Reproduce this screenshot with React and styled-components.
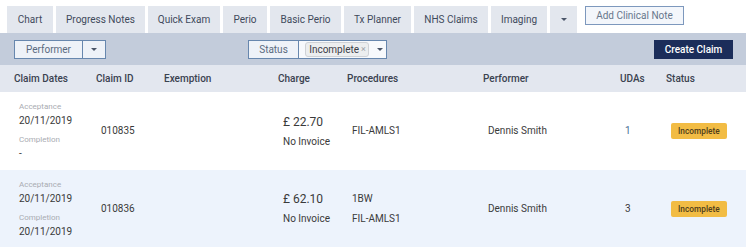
import React from "react";
import styled, { createGlobalStyle } from "styled-components";

const GlobalStyle = createGlobalStyle`
  body {
    margin: 0;
    background: #ffffff;
    font-family: Roboto, "Liberation Sans", sans-serif;
    color: #333;
  }
`;

const Page = styled.div`
  width: 746px;
  height: 247px;
  overflow: hidden;
`;

const TabBar = styled.div`
  display: flex;
  align-items: flex-start;
  height: 33px;
  padding: 6px 0 0 7px;
  box-sizing: border-box;
`;

const Tab = styled.div`
  display: flex;
  align-items: center;
  justify-content: center;
  height: 27px;
  width: ${(p) => p.$w}px;
  flex-shrink: 0;
  margin-right: 3px;
  background: #e3e7ee;
  color: #3f4a5c;
  font-size: 10px;
  white-space: nowrap;
`;

const Caret = styled.span`
  display: inline-block;
  width: 0;
  height: 0;
  border-left: ${(p) => p.$size || 3}px solid transparent;
  border-right: ${(p) => p.$size || 3}px solid transparent;
  border-top: ${(p) => p.$size || 3}px solid ${(p) => p.$color || "#4a5568"};
`;

const NoteButton = styled.div`
  display: flex;
  align-items: center;
  justify-content: center;
  margin-left: 5px;
  width: 99px;
  height: 19px;
  box-sizing: border-box;
  border: 1px solid #7d98bd;
  background: #f3f6fb;
  color: #68768c;
  font-size: 10px;
`;

const Toolbar = styled.div`
  display: flex;
  align-items: center;
  height: 32px;
  padding: 0 13px 0 14px;
  background: #c3ccdb;
`;

const SplitButton = styled.div`
  display: flex;
  height: 19px;
  box-sizing: border-box;
  border: 1px solid #6787ae;
  background: #eef2f8;
  margin-left: ${(p) => p.$offset || 0}px;
`;

const SplitPart = styled.div`
  display: flex;
  align-items: center;
  justify-content: center;
  width: ${(p) => p.$w}px;
  color: #5a6a80;
  font-size: 10px;
  background: ${(p) => p.$bg || "transparent"};
  & + & {
    border-left: 1px solid #6787ae;
  }
`;

const Chip = styled.span`
  display: inline-flex;
  align-items: center;
  height: 13px;
  padding: 0 2px 0 3px;
  margin: 0 8px 0 3px;
  border: 1px solid #cfd2d6;
  border-radius: 3px;
  background: #eceeef;
  color: #3b4048;
  font-size: 10px;
  gap: 2px;
`;

const ChipX = styled.span`
  color: #a0a4aa;
  font-size: 9px;
`;

const PrimaryButton = styled.div`
  display: flex;
  align-items: center;
  justify-content: center;
  margin-left: auto;
  width: 79px;
  height: 19px;
  background: #1b2d5a;
  color: #fff;
  font-size: 10px;
  font-weight: 500;
`;

const Grid = styled.div`
  display: grid;
  grid-template-columns: 82px 68px 114px 69px 136px 137px 46px 1fr;
  align-items: center;
  padding-left: 10px;
  background: ${(p) => p.$bg};
  height: ${(p) => p.$h}px;
`;

const HeadCell = styled.div`
  padding-left: 4px;
  font-size: 10px;
  font-weight: 500;
  color: #3a4250;
`;

const Cell = styled.div`
  padding-left: 9px;
  font-size: 10px;
  line-height: 12px;
  color: ${(p) => p.$color || "#3a3a3a"};
  display: flex;
  flex-direction: column;
  gap: ${(p) => p.$gap || 0}px;
`;

const DateLabel = styled.div`
  font-size: 8px;
  line-height: 10px;
  color: #a9acb2;
  margin-top: ${(p) => (p.$second ? 8 : 0)}px;
  margin-bottom: 3px;
`;

const Amount = styled.div`
  font-size: 12px;
  line-height: 14px;
`;

const Badge = styled.span`
  align-self: flex-start;
  padding: 0 7px;
  height: 16px;
  line-height: 16px;
  border-radius: 2px;
  background: #f2bc44;
  color: #4f3d1b;
  font-size: 8.3px;
  font-weight: 500;
`;

const tabs = [
  ["Chart", 46],
  ["Progress Notes", 89],
  ["Quick Exam", 72],
  ["Perio", 44],
  ["Basic Perio", 71],
  ["Tx Planner", 67],
  ["NHS Claims", 74],
  ["Imaging", 56],
];

const claims = [
  {
    id: "010835",
    acceptance: "20/11/2019",
    completion: "-",
    charge: "£ 22.70",
    procedures: ["FIL-AMLS1"],
    udas: "1",
    udaColor: "#4a6f96",
    bg: "#ffffff",
    h: 78,
  },
  {
    id: "010836",
    acceptance: "20/11/2019",
    completion: "20/11/2019",
    charge: "£ 62.10",
    procedures: ["1BW", "FIL-AMLS1"],
    udas: "3",
    udaColor: "#3a3a3a",
    bg: "#edf3fc",
    h: 77,
  },
];

const App = () => {
  return (
    <Page>
      <GlobalStyle />
      <TabBar>
        {tabs.map(([t, w]) => (
          <Tab key={t} $w={w}>
            {t}
          </Tab>
        ))}
        <Tab $w={27}>
          <Caret $size={3} />
        </Tab>
        <NoteButton>Add Clinical Note</NoteButton>
      </TabBar>

      <Toolbar>
        <SplitButton>
          <SplitPart $w={67}>Performer</SplitPart>
          <SplitPart $w={22}>
            <Caret />
          </SplitPart>
        </SplitButton>
        <SplitButton $offset={142}>
          <SplitPart $w={49}>Status</SplitPart>
          <SplitPart $w={87} $bg="#f7f9fc">
            <Chip>
              Incomplete<ChipX>×</ChipX>
            </Chip>
            <Caret />
          </SplitPart>
        </SplitButton>
        <PrimaryButton>Create Claim</PrimaryButton>
      </Toolbar>

      <Grid $bg="#e3e7ef" $h={27}>
        <HeadCell>Claim Dates</HeadCell>
        <HeadCell>Claim ID</HeadCell>
        <HeadCell>Exemption</HeadCell>
        <HeadCell>Charge</HeadCell>
        <HeadCell>Procedures</HeadCell>
        <HeadCell>Performer</HeadCell>
        <HeadCell>UDAs</HeadCell>
        <HeadCell>Status</HeadCell>
      </Grid>

      {claims.map((c) => (
        <Grid key={c.id} $bg={c.bg} $h={c.h}>
          <Cell>
            <DateLabel>Acceptance</DateLabel>
            <div>{c.acceptance}</div>
            <DateLabel $second>Completion</DateLabel>
            <div>{c.completion}</div>
          </Cell>
          <Cell>{c.id}</Cell>
          <Cell />
          <Cell $gap={7}>
            <Amount>{c.charge}</Amount>
            <div>No Invoice</div>
          </Cell>
          <Cell $gap={8}>
            {c.procedures.map((p) => (
              <div key={p}>{p}</div>
            ))}
          </Cell>
          <Cell>Dennis Smith</Cell>
          <Cell $color={c.udaColor}>{c.udas}</Cell>
          <Cell>
            <Badge>Incomplete</Badge>
          </Cell>
        </Grid>
      ))}
    </Page>
  );
};

export default App;
